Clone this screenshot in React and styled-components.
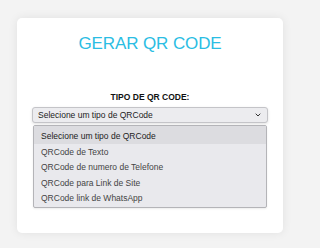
import React from 'react'
import styled, { createGlobalStyle } from 'styled-components'

const GlobalStyle = createGlobalStyle`
	html, body {
		margin: 0;
		padding: 0;
		background: #f3f3f3;
		font-family: "Liberation Sans", Arial, sans-serif;
	}
`

const Page = styled.div`
	padding: 18px 17px;
	width: 300px;
	height: 248px;
	box-sizing: border-box;
`

const Card = styled.div`
	position: relative;
	width: 266px;
	height: 215px;
	box-sizing: border-box;
	padding: 16px 15px 0;
	background: #ffffff;
	border-radius: 5px;
	box-shadow: 0 0 10px rgba(0, 0, 0, 0.08);
	display: flex;
	flex-direction: column;
	align-items: stretch;
`

const Title = styled.h1`
	margin: 0;
	font-size: 17px;
	line-height: 20px;
	font-weight: 400;
	color: #2bbde3;
	text-align: center;
	letter-spacing: -0.1px;
`

const Label = styled.label`
	margin-top: 38px;
	font-size: 8.5px;
	line-height: 10px;
	font-weight: 700;
	color: #111;
	text-align: center;
`

const Field = styled.div`
	position: relative;
	margin-top: 5px;
`

const SelectBox = styled.div`
	height: 16px;
	box-sizing: border-box;
	display: flex;
	align-items: center;
	justify-content: space-between;
	padding: 0 5px 0 5px;
	background: #ececef;
	border: 1px solid #c4c4c8;
	border-radius: 3px;
	box-shadow: 0 1px 3px rgba(0, 0, 0, 0.12);
	font-size: 8.5px;
	color: #222;
`

const Chevron = styled.svg`
	width: 6px;
	height: 4px;
	margin-right: 1px;
`

const OptionList = styled.ul`
	position: absolute;
	top: 18px;
	left: 1px;
	right: 1px;
	margin: 0;
	padding: 0 0 2px;
	list-style: none;
	background: #e9e9ed;
	border: 1px solid #b4b4b8;
	border-radius: 2px;
	box-shadow: 0 1px 2px rgba(0, 0, 0, 0.08);
`

const Option = styled.li`
	height: ${p => (p.$first ? '18px' : '15.3px')};
	box-sizing: border-box;
	padding: ${p => (p.$first ? '5px' : '3px')} 7px 0;
	font-size: 8.5px;
	line-height: 10px;
	color: ${p => (p.$active ? '#222' : '#444')};
	background: ${p => (p.$active ? '#dcdce0' : 'transparent')};
	white-space: nowrap;
`

const options = [
	'Selecione um tipo de QRCode',
	'QRCode de Texto',
	'QRCode de numero de Telefone',
	'QRCode para Link de Site',
	'QRCode link de WhatsApp',
]

const App = () => {
	return (
		<>
			<GlobalStyle />
			<Page>
				<Card>
					<Title>GERAR QR CODE</Title>
					<Label>TIPO DE QR CODE:</Label>
					<Field>
						<SelectBox>
							<span>Selecione um tipo de QRCode</span>
							<Chevron viewBox="0 0 6 4">
								<path d="M0.7 0.7 L3 3 L5.3 0.7" fill="none" stroke="#333" strokeWidth="1" />
							</Chevron>
						</SelectBox>
						<OptionList>
							{options.map((o, i) => (
								<Option key={o} $first={i === 0} $active={i === 0}>{o}</Option>
							))}
						</OptionList>
					</Field>
				</Card>
			</Page>
		</>
	)
}

export default App
